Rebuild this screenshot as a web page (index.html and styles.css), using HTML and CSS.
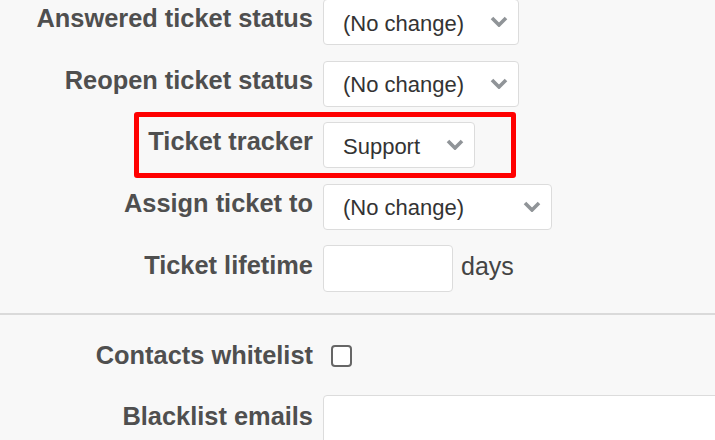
FILE: index.html
```html
<!DOCTYPE html>
<html lang="en">
<head>
<meta charset="utf-8">
<title>Helpdesk settings</title>
<link rel="stylesheet" href="styles.css">
</head>
<body>
<div class="page">
  <div class="group group-top">
    <div class="row">
      <label class="lbl">Answered ticket status</label>
      <span class="sel sel-md"><select><option>(No change)</option></select><svg class="chev" viewBox="0 0 18 11"><polyline points="2,2 9,9 16,2"/></svg></span>
    </div>
    <div class="row">
      <label class="lbl">Reopen ticket status</label>
      <span class="sel sel-md"><select><option>(No change)</option></select><svg class="chev" viewBox="0 0 18 11"><polyline points="2,2 9,9 16,2"/></svg></span>
    </div>
    <div class="row">
      <label class="lbl">Ticket tracker</label>
      <span class="sel sel-sm"><select><option>Support</option></select><svg class="chev" viewBox="0 0 18 11"><polyline points="2,2 9,9 16,2"/></svg></span>
    </div>
    <div class="row">
      <label class="lbl">Assign ticket to</label>
      <span class="sel sel-lg"><select><option>(No change)</option></select><svg class="chev" viewBox="0 0 18 11"><polyline points="2,2 9,9 16,2"/></svg></span>
    </div>
    <div class="row">
      <label class="lbl lbl-life">Ticket lifetime</label>
      <input class="txt txt-life" type="text">
      <span class="unit">days</span>
    </div>
  </div>
  <div class="sep"></div>
  <div class="group group-bottom">
    <div class="row">
      <label class="lbl">Contacts whitelist</label>
      <input class="chk" type="checkbox">
    </div>
    <div class="row row-black">
      <label class="lbl lbl-black">Blacklist emails</label>
      <input class="txt txt-wide" type="text">
    </div>
  </div>
  <div class="highlight"></div>
</div>
</body>
</html>
```
FILE: styles.css
```css
html, body {
  margin: 0;
  padding: 0;
  background: #f8f8f8;
  overflow: hidden;
}

.page {
  position: relative;
  width: 715px;
  height: 440px;
  overflow: hidden;
  font-family: "Liberation Sans", Arial, sans-serif;
}

.group {
  display: flex;
  flex-direction: column;
}

.group-top {
  margin-top: -1px;
  gap: 15.5px;
}

.row {
  display: flex;
  align-items: flex-start;
}

.lbl {
  width: 313px;
  flex: none;
  text-align: right;
  font-weight: bold;
  font-size: 25.4px;
  line-height: 29px;
  color: #4f4f4f;
  padding-top: 5px;
  box-sizing: border-box;
  margin-right: 10px;
  white-space: nowrap;
}

.lbl-life { padding-top: 6px; }
.lbl-black { padding-top: 7px; }

.sel {
  position: relative;
  display: block;
  height: 46px;
  flex: none;
}

.sel select {
  appearance: none;
  -webkit-appearance: none;
  width: 100%;
  height: 46px;
  box-sizing: border-box;
  margin: 0;
  border: 1px solid #dcdcdc;
  border-radius: 4px;
  background: #fff;
  font-family: "Liberation Sans", Arial, sans-serif;
  font-size: 22px;
  color: #333;
  padding: 2px 40px 0 19px;
  outline: none;
}

.sel-md { width: 196px; }
.sel-sm { width: 152px; }
.sel-lg { width: 229px; }

.chev {
  position: absolute;
  right: 11px;
  top: 17px;
  width: 18px;
  height: 11px;
  fill: none;
  stroke: #909498;
  stroke-width: 3.6;
  pointer-events: none;
}

.txt {
  box-sizing: border-box;
  margin: 0;
  border: 1px solid #dcdcdc;
  border-radius: 4px;
  background: #fff;
  font-family: "Liberation Sans", Arial, sans-serif;
  font-size: 22px;
  outline: none;
  flex: none;
}

.txt-life {
  width: 130px;
  height: 47px;
}

.unit {
  font-size: 25px;
  line-height: 29px;
  color: #444;
  margin-left: 8px;
  padding-top: 7px;
}

.sep {
  margin-top: 21px;
  height: 2px;
  background: #dadada;
}

.group-bottom {
  margin-top: 21px;
}

.chk {
  appearance: none;
  -webkit-appearance: none;
  width: 21px;
  height: 22px;
  margin: 9px 0 0 8px;
  box-sizing: border-box;
  border: 2px solid #666;
  border-radius: 4px;
  background: #fff;
}

.row-black {
  margin-top: 25px;
}

.txt-wide {
  width: 420px;
  height: 80px;
}

.highlight {
  position: absolute;
  left: 134px;
  top: 112px;
  width: 382px;
  height: 66px;
  box-sizing: border-box;
  border: 5px solid #ff0000;
  border-radius: 3px;
  pointer-events: none;
}
```
